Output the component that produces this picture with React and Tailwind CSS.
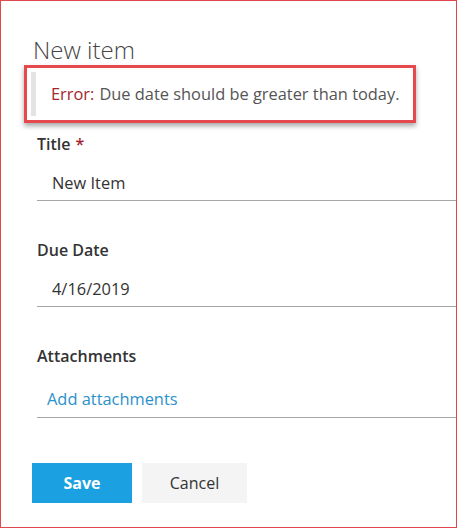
import React from 'react';

const font = { fontFamily: '"Segoe UI", "Open Sans", "Noto Sans", sans-serif' };

function Field({ label, required, children, link }) {
  return (
    <div>
      <div className="text-[16px] font-semibold text-[#333] leading-[20px]">
        {label}
        {required && <span className="text-[#a4262c] ml-[5px]">*</span>}
      </div>
      {link ? (
        <div className="mt-[16px] border-b border-[#a6a6a6] h-[36px] pl-[10px] flex items-center">
          <span className="text-[16.4px] text-[#2b91c9]">{children}</span>
        </div>
      ) : (
        <div className="mt-[12px] border-b border-[#a6a6a6] h-[35px] pl-[15px] flex items-center">
          <span className="text-[16.4px] text-[#333]">{children}</span>
        </div>
      )}
    </div>
  );
}

export default function App() {
  return (
    <div
      className="w-[457px] h-[528px] bg-white border border-[#e2474b] overflow-hidden"
      style={font}
    >
      <div className="pt-[34px] pl-[32px] text-[24px] font-light text-[#444] leading-[30px]">New item</div>

      <div className="ml-[23px] w-[392px] h-[58px] border-[3px] border-[#e5484d] p-[4px] shadow-[0_3px_5px_rgba(0,0,0,0.35)]">
        <div className="h-full flex items-center border-l-[5px] border-[#e3e3e3] pl-[15px] text-[16.4px] text-[#555] whitespace-nowrap">
          <span className="text-[#a4262c]">Error:</span>
          <span className="ml-[5px]">Due date should be greater than today.</span>
        </div>
      </div>

      <div className="pl-[36px] mt-[11px] flex flex-col gap-[39px] mr-[-20px]">
        <Field label="Title" required>New Item</Field>
        <Field label="Due Date">4/16/2019</Field>
        <Field label="Attachments" link>Add attachments</Field>
      </div>

      <div className="flex gap-[10px] pl-[31px] mt-[45px]">
        <button className="w-[100px] h-[40px] bg-[#1ba1e2] text-white font-bold text-[16px]">Save</button>
        <button className="w-[105px] h-[40px] bg-[#f4f4f4] text-[#333] text-[16px]">Cancel</button>
      </div>
    </div>
  );
}
